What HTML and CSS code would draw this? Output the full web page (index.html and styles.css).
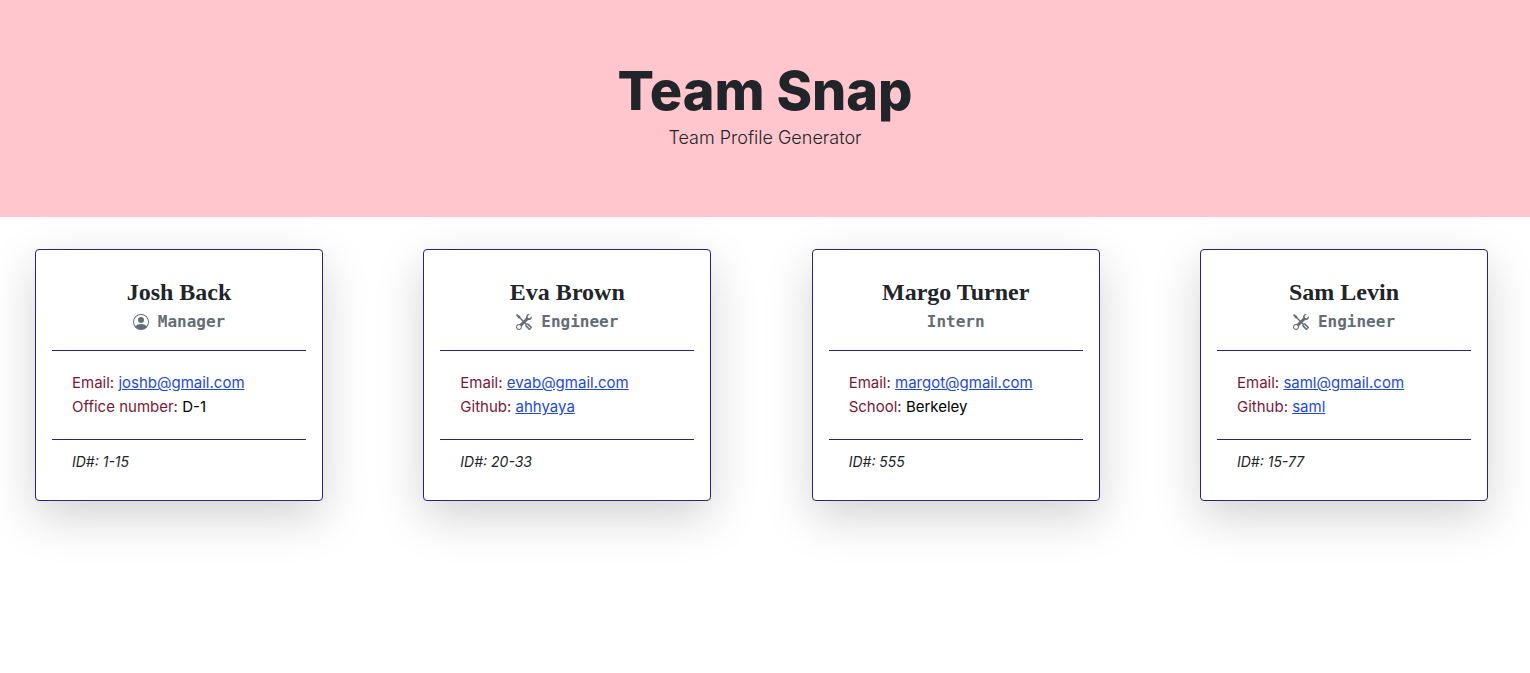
FILE: index.html
```html
<!DOCTYPE html>
<html lang="en">
<head>
  <meta charset="utf-8">
  <meta name="viewport" content="width=device-width, initial-scale=1">
  <title>Team Snap</title>
  <link rel="stylesheet" href="styles.css">
</head>
<body>
  <svg class="sprite" aria-hidden="true">
    <symbol id="icon-person" viewBox="0 0 16 16">
      <path d="M11 6a3 3 0 1 1-6 0 3 3 0 0 1 6 0"/>
      <path fill-rule="evenodd" d="M0 8a8 8 0 1 1 16 0A8 8 0 0 1 0 8m8-7a7 7 0 0 0-5.468 11.37C3.242 11.226 4.805 10 8 10s4.757 1.225 5.468 2.37A7 7 0 0 0 8 1"/>
    </symbol>
    <symbol id="icon-tools" viewBox="0 0 16 16">
      <path d="M1 0 0 1l2.2 3.081a1 1 0 0 0 .815.419h.07a1 1 0 0 1 .708.293l2.675 2.675-2.617 2.654A3.003 3.003 0 0 0 0 13a3 3 0 1 0 5.878-.851l2.654-2.617.968.968-.305.914a1 1 0 0 0 .242 1.023l3.27 3.27a.997.997 0 0 0 1.414 0l1.586-1.586a.997.997 0 0 0 0-1.414l-3.27-3.27a1 1 0 0 0-1.023-.242L10.5 9.5l-.96-.96 2.68-2.643A3.005 3.005 0 0 0 16 3q0-.405-.102-.777l-2.14 2.141L12 4l-.364-1.757L13.777.102a3 3 0 0 0-3.675 3.68L7.462 6.46 4.793 3.793a1 1 0 0 1-.293-.707v-.071a1 1 0 0 0-.419-.814zm9.646 10.646a.5.5 0 0 1 .708 0l2.914 2.915a.5.5 0 0 1-.707.707l-2.915-2.914a.5.5 0 0 1 0-.708M3 11l.471.242.529.026.287.445.445.287.026.529L5 13l-.242.471-.026.529-.445.287-.287.445-.529.026L3 15l-.471-.242L2 14.732l-.287-.445L1.268 14l-.026-.529L1 13l.242-.471.026-.529.445-.287.287-.445.529-.026z"/>
    </symbol>
  </svg>

  <header class="hero">
    <h1 class="hero-title">Team Snap</h1>
    <p class="hero-lead">Team Profile Generator</p>
  </header>

  <main class="team">
    <article class="card">
      <div class="card-head">
        <h2 class="name">Josh Back</h2>
        <h3 class="role"><svg class="icon" aria-hidden="true"><use href="#icon-person"/></svg>Manager</h3>
      </div>
      <ul class="details">
        <li>Email: <a href="mailto:joshb@gmail.com">joshb@gmail.com</a></li>
        <li>Office number: <span class="value">D-1</span></li>
      </ul>
      <p class="member-id">ID#: 1-15</p>
    </article>

    <article class="card">
      <div class="card-head">
        <h2 class="name">Eva Brown</h2>
        <h3 class="role"><svg class="icon" aria-hidden="true"><use href="#icon-tools"/></svg>Engineer</h3>
      </div>
      <ul class="details">
        <li>Email: <a href="mailto:evab@gmail.com">evab@gmail.com</a></li>
        <li>Github: <a href="#ahhyaya">ahhyaya</a></li>
      </ul>
      <p class="member-id">ID#: 20-33</p>
    </article>

    <article class="card">
      <div class="card-head">
        <h2 class="name">Margo Turner</h2>
        <h3 class="role">Intern</h3>
      </div>
      <ul class="details">
        <li>Email: <a href="mailto:margot@gmail.com">margot@gmail.com</a></li>
        <li>School: <span class="value">Berkeley</span></li>
      </ul>
      <p class="member-id">ID#: 555</p>
    </article>

    <article class="card">
      <div class="card-head">
        <h2 class="name">Sam Levin</h2>
        <h3 class="role"><svg class="icon" aria-hidden="true"><use href="#icon-tools"/></svg>Engineer</h3>
      </div>
      <ul class="details">
        <li>Email: <a href="mailto:saml@gmail.com">saml@gmail.com</a></li>
        <li>Github: <a href="#saml">saml</a></li>
      </ul>
      <p class="member-id">ID#: 15-77</p>
    </article>
  </main>
</body>
</html>
```

FILE: styles.css
```css
* {
  box-sizing: border-box;
}

body {
  min-height: 100vh;
  margin: 0;
  background: #fff;
  color: #212529;
  font-family: Inter, "Liberation Sans", sans-serif;
  font-size: 15px;
  line-height: 24px;
}

h1, h2, h3, p, ul {
  margin: 0;
  padding: 0;
}

.sprite {
  display: none;
}

.hero {
  padding: 58px 16px 64px;
  background: #ffc7cd;
  text-align: center;
}

.hero-title {
  font-size: 54px;
  font-weight: 800;
  line-height: 65px;
}

.hero-lead {
  font-size: 18px;
  font-weight: 300;
  line-height: 30px;
}

.team {
  display: flex;
  flex-wrap: wrap;
  justify-content: space-between;
  gap: 32px;
  padding: 32px 42px 96px 35px;
}

.card {
  width: 288px;
  padding: 16px;
  border: 1px solid #29237a;
  border-radius: 4px;
  background: #fff;
  box-shadow: 0 16px 48px rgba(0, 0, 0, 0.175);
}

.card-head {
  display: flex;
  flex-direction: column;
  gap: 6px;
  padding: 14px 0 16px;
  text-align: center;
}

.name {
  font-family: "Liberation Serif", serif;
  font-size: 24px;
  font-weight: 700;
  line-height: 24px;
}

.role {
  display: flex;
  align-items: center;
  justify-content: center;
  gap: 9px;
  color: #646d76;
  font-family: "DejaVu Sans Mono", monospace;
  font-size: 16px;
  font-weight: 700;
  line-height: 24px;
}

.icon {
  width: 16px;
  height: 16px;
  fill: currentColor;
}

.details {
  padding: 20px;
  border-top: 1px solid #29237a;
  border-bottom: 1px solid #29237a;
  color: #7a1735;
  list-style: none;
}

.details a {
  color: #1d49d8;
}

.value {
  color: #000;
}

.member-id {
  padding: 12px 20px;
  font-size: 14px;
  font-style: italic;
  line-height: 20px;
}
```
